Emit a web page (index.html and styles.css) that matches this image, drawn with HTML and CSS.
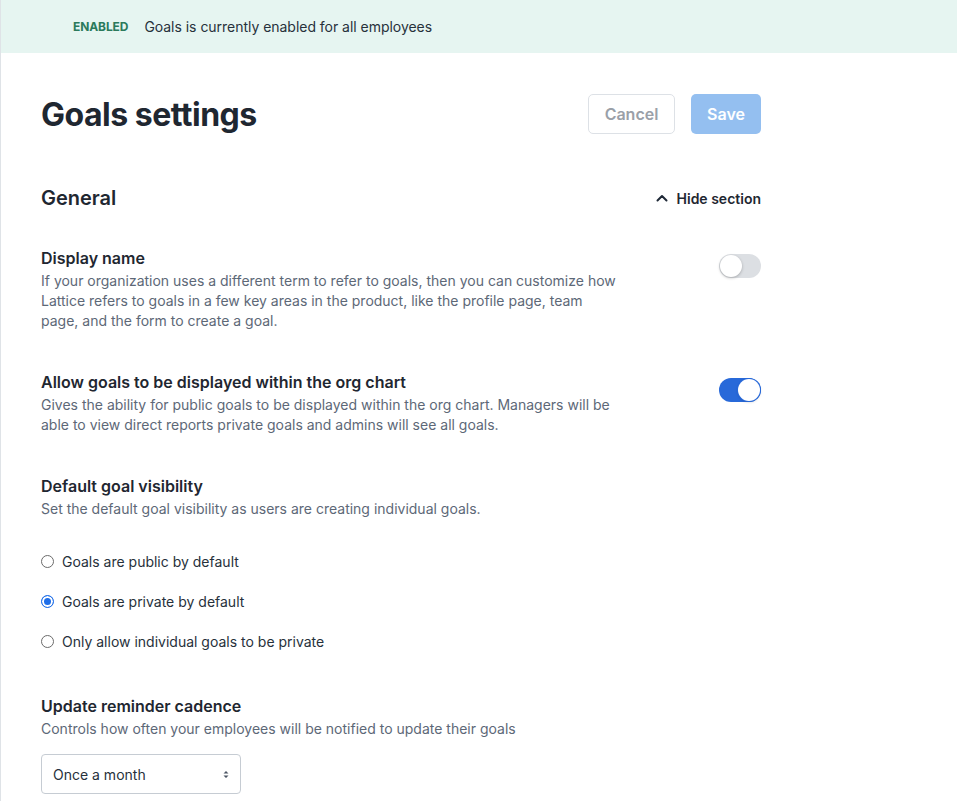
FILE: index.html
```html
<!DOCTYPE html>
<html>
<head>
<meta charset="utf-8">
<link rel="stylesheet" href="styles.css">
</head>
<body>
<div class="page">
  <div class="banner">
    <span class="badge">ENABLED</span>
    <span class="banner-text">Goals is currently enabled for all employees</span>
  </div>
  <div class="content">
    <div class="header">
      <h1 class="title">Goals settings</h1>
      <div class="actions">
        <button class="btn btn-cancel">Cancel</button>
        <button class="btn btn-save">Save</button>
      </div>
    </div>
    <div class="section-head">
      <h2 class="section-title">General</h2>
      <div class="hide-link">
        <svg class="chev" width="12" height="8" viewBox="0 0 12 8"><path d="M1.5 6.5 L6 2 L10.5 6.5" fill="none" stroke="#1f2937" stroke-width="2" stroke-linecap="round" stroke-linejoin="round"/></svg>
        <span>Hide section</span>
      </div>
    </div>

    <div class="setting setting-toggle first">
      <div class="setting-text">
        <div class="setting-title">Display name</div>
        <div class="setting-desc">If your organization uses a different term to refer to goals, then you can customize how Lattice refers to goals in a few key areas in the product, like the profile page, team page, and the form to create a goal.</div>
      </div>
      <div class="toggle"><div class="knob"></div></div>
    </div>

    <div class="setting setting-toggle second">
      <div class="setting-text">
        <div class="setting-title">Allow goals to be displayed within the org chart</div>
        <div class="setting-desc">Gives the ability for public goals to be displayed within the org chart. Managers will be able to view direct reports private goals and admins will see all goals.</div>
      </div>
      <div class="toggle on"><div class="knob"></div></div>
    </div>

    <div class="setting third">
      <div class="setting-title">Default goal visibility</div>
      <div class="setting-desc">Set the default goal visibility as users are creating individual goals.</div>
      <div class="radios">
        <label class="radio"><span class="dot"></span><span>Goals are public by default</span></label>
        <label class="radio"><span class="dot checked"></span><span>Goals are private by default</span></label>
        <label class="radio"><span class="dot"></span><span>Only allow individual goals to be private</span></label>
      </div>
    </div>

    <div class="setting fourth">
      <div class="setting-title">Update reminder cadence</div>
      <div class="setting-desc">Controls how often your employees will be notified to update their goals</div>
      <div class="select">
        <span>Once a month</span>
        <svg width="6" height="9" viewBox="0 0 6 9"><path d="M0.5 3.5 L3 1 L5.5 3.5 Z M0.5 5.5 L3 8 L5.5 5.5 Z" fill="#4b5563"/></svg>
      </div>
    </div>
  </div>
</div>
</body>
</html>
```
FILE: styles.css
```css
* { box-sizing: border-box; }
html, body { margin: 0; padding: 0; background: #fff; }
body { font-family: Inter, "Noto Sans", sans-serif; color: #1f2733; }
.page { border-left: 1px solid #dfe3e7; min-height: 801px; }
.banner {
  height: 53px;
  background: #e6f5f1;
  display: flex;
  align-items: center;
  padding-left: 72px;
}
.badge { font-size: 12px; font-weight: 700; color: #2b7a5c; letter-spacing: -0.1px; }
.banner-text { font-size: 14px; color: #27313b; margin-left: 16px; letter-spacing: -0.03px; }
.content { padding: 0 0 0 40px; width: 760px; }
.header { display: flex; justify-content: space-between; align-items: center; height: 40px; margin-top: 41px; }
.title { font-size: 32px; font-weight: 700; margin: 0; color: #1f2731; letter-spacing: -0.5px; }
.actions { display: flex; gap: 16px; }
.btn { font-family: inherit; font-size: 16px; font-weight: 600; height: 40px; border-radius: 5px; cursor: pointer; }
.btn-cancel { width: 87px; background: #fff; border: 1px solid #dde1e6; color: #9aa0a8; }
.btn-save { width: 70px; background: #94bff0; border: none; color: #fff; }
.section-head { display: flex; justify-content: space-between; align-items: center; margin-top: 52px; height: 24px; }
.section-title { font-size: 20px; font-weight: 600; margin: 0; color: #1f2731; }
.hide-link { display: flex; align-items: center; gap: 9px; font-size: 14px; font-weight: 600; color: #1f2731; }
.setting-toggle { display: flex; justify-content: space-between; align-items: flex-start; }
.setting-text { width: 578px; }
.setting-title { font-size: 16px; font-weight: 600; line-height: 22px; color: #1f2731; }
.setting-desc { font-size: 14px; line-height: 20px; color: #5d6877; margin-top: 2px; }
.toggle { width: 42px; height: 24px; border-radius: 12px; background: #dcdfe3; position: relative; margin-top: 7px; }
.knob { position: absolute; top: 1px; left: 1px; width: 22px; height: 22px; border-radius: 50%; background: #fff; box-shadow: 0 1px 3px rgba(0,0,0,0.25); }
.toggle.on { background: #2869d9; }
.toggle.on .knob { left: 19px; box-shadow: 0 0 0 1px #2869d9, 0 1px 3px rgba(0,0,0,0.2); }
.first { margin-top: 37px; }
.second { margin-top: 40px; }
.third { margin-top: 40px; }
.radios { margin-top: 32px; display: flex; flex-direction: column; gap: 20px; }
.radio { display: flex; align-items: center; gap: 8px; font-size: 14px; height: 20px; color: #27313b; }
.dot { width: 13px; height: 13px; border-radius: 50%; border: 1px solid #6b6b6b; background: #fff; flex: none; }
.dot.checked { border: 1px solid #1f6ee8; background: #1f6ee8; box-shadow: inset 0 0 0 2px #fff; }
.fourth { margin-top: 44px; }
.select {
  margin-top: 15px; width: 200px; height: 40px; border: 1px solid #c6ccd3; border-radius: 4px;
  display: flex; align-items: center; justify-content: space-between; padding: 0 11px 0 11px;
  font-size: 14px; color: #27313b;
}
```
